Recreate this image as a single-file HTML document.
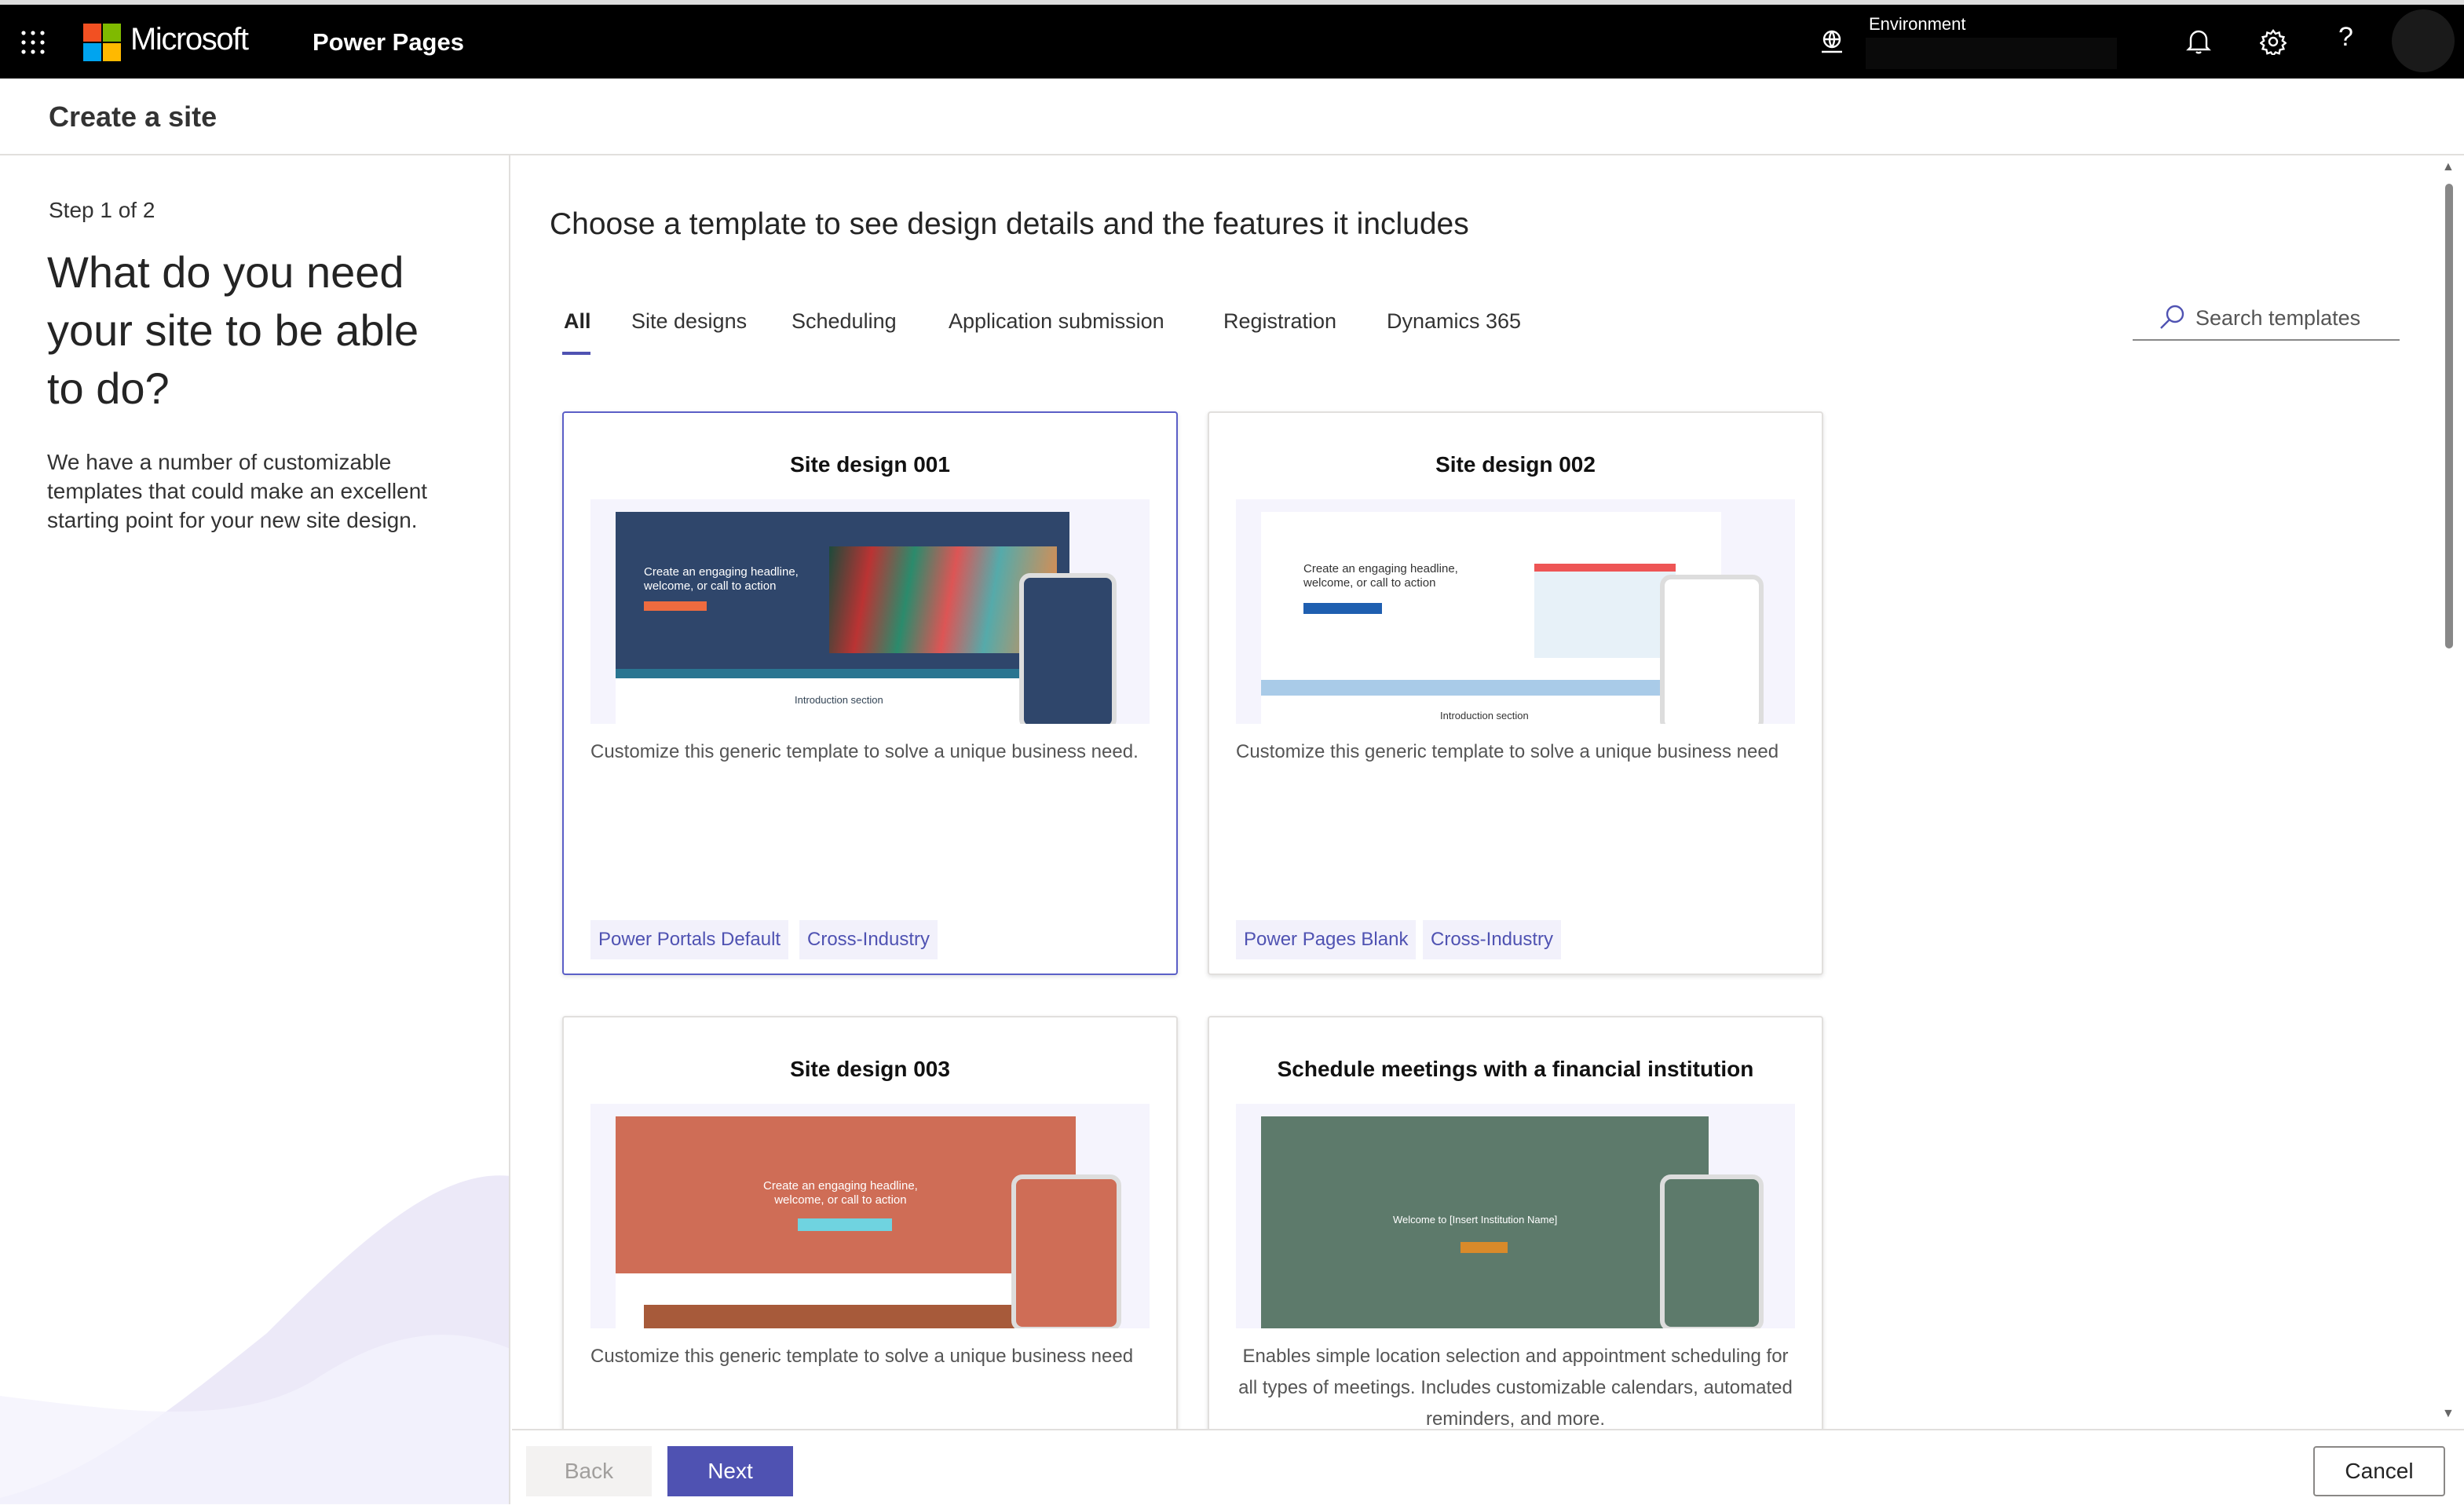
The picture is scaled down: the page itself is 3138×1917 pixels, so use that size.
<!DOCTYPE html>
<html><head><meta charset="utf-8"><style>
*{box-sizing:border-box;margin:0;padding:0}
html,body{width:3138px;height:1917px;overflow:hidden;background:#fff}
#r{zoom:2;width:1569px;height:958px;position:relative;font-family:"Segoe UI","Liberation Sans",sans-serif;color:#242424}
.a{position:absolute}
.card{position:absolute;width:392px;background:#fff;border:1px solid #e1dfdd;box-shadow:0 1px 3px rgba(0,0,0,.12);border-radius:2px;overflow:hidden}
.card h3{font-size:14px;font-weight:600;text-align:center;margin-top:25px;color:#111}
.card .img{position:absolute;left:17px;top:55px;width:356px;height:143px;background:#f5f4fd;overflow:hidden}
.card .desc{position:absolute;left:17px;top:206px;right:17px;font-size:12px;color:#555;line-height:20px}
.tag{position:absolute;top:323px;height:25px;background:#f2f1fb;color:#4f52b2;font-size:12px;line-height:25px;padding:0 5px}
.tab{position:absolute;top:197px;font-size:13.5px;color:#333}
</style></head><body><div id="r">
<div class="a" style="left:0;top:0;width:1569px;height:3px;background:#ddd"></div>
<div class="a" style="left:0;top:3px;width:1569px;height:47px;background:#000"></div>
<svg class="a" style="left:13px;top:19px" width="16" height="16"><g fill="#fff"><circle cx="2" cy="2" r="1.3"/><circle cx="8" cy="2" r="1.3"/><circle cx="14" cy="2" r="1.3"/><circle cx="2" cy="8" r="1.3"/><circle cx="8" cy="8" r="1.3"/><circle cx="14" cy="8" r="1.3"/><circle cx="2" cy="14" r="1.3"/><circle cx="8" cy="14" r="1.3"/><circle cx="14" cy="14" r="1.3"/></g></svg>
<svg class="a" style="left:53px;top:15px" width="25" height="25"><rect width="11.5" height="11.5" fill="#f25022"/><rect x="12.5" width="11.5" height="11.5" fill="#7fba00"/><rect y="12.5" width="11.5" height="11.5" fill="#00a4ef"/><rect x="12.5" y="12.5" width="11.5" height="11.5" fill="#ffb900"/></svg>
<div class="a" style="left:83px;top:14px;color:#fff;font-size:20px;letter-spacing:-.7px">Microsoft</div>
<div class="a" style="left:199px;top:18px;color:#fff;font-size:15.5px;font-weight:600">Power Pages</div>
<svg class="a" style="left:1158px;top:18px" width="17" height="17" fill="none" stroke="#fff" stroke-width="1.2"><circle cx="8.5" cy="7" r="5"/><path d="M3.5 7h10M8.5 2c-2 3-2 7 0 10M8.5 2c2 3 2 7 0 10M2 15h13"/></svg>
<div class="a" style="left:1190px;top:9px;color:#fff;font-size:11px">Environment</div>
<div class="a" style="left:1188px;top:24px;width:160px;height:20px;background:#0a0a0a"></div>
<svg class="a" style="left:1392px;top:18px" width="16" height="17" fill="none" stroke="#fff" stroke-width="1.2"><path d="M3 12V7a5 5 0 0 1 10 0v5l1.5 1.5h-13z M6.5 15a2 2 0 0 0 3 0"/></svg>
<svg class="a" style="left:1439px;top:18px" width="17" height="17" fill="none" stroke="#fff" stroke-width="1.2"><circle cx="8.5" cy="8.5" r="2.5"/><path d="M8.5 1.5l1.5 2 2.3-.8.5 2.4 2.4.5-.8 2.3 2 1.5-2 1.5.8 2.3-2.4.5-.5 2.4-2.3-.8-1.5 2-1.5-2-2.3.8-.5-2.4-2.4-.5.8-2.3-2-1.5 2-1.5-.8-2.3 2.4-.5.5-2.4 2.3.8z"/></svg>
<div class="a" style="left:1489px;top:14px;color:#fff;font-size:17px">?</div>
<div class="a" style="left:1523px;top:6px;width:40px;height:40px;border-radius:50%;background:#1a1a1a"></div>
<div class="a" style="left:0;top:50px;width:1569px;height:49px;border-bottom:1px solid #e1dfdd"></div>
<div class="a" style="left:31px;top:64px;font-size:18px;font-weight:600;color:#333">Create a site</div>
<div class="a" style="left:0;top:99px;width:325px;height:859px;border-right:1px solid #e1dfdd;overflow:hidden">
<svg class="a" style="left:0;top:640px" width="325" height="220"><path d="M0 215 C60 200 120 150 170 110 C230 50 280 5 325 10 V220 H0Z" fill="#ece9f8"/><path d="M0 150 C80 160 150 170 200 140 C260 100 300 110 325 120 V220 H0Z" fill="#f4f2fc" opacity=".8"/></svg>
</div>
<div class="a" style="left:31px;top:126px;font-size:14px;color:#333">Step 1 of 2</div>
<div class="a" style="left:30px;top:155px;font-size:28px;line-height:37px;color:#242424;width:255px">What do you need your site to be able to do?</div>
<div class="a" style="left:30px;top:285px;font-size:14px;line-height:18.5px;color:#333;width:260px">We have a number of customizable templates that could make an excellent starting point for your new site design.</div>
<div class="a" style="left:350px;top:132px;font-size:19.5px;color:#242424">Choose a template to see design details and the features it includes</div>
<div class="tab" style="left:359px;color:#242424;font-weight:600">All</div>
<div class="a" style="left:358px;top:224px;width:18px;height:2px;background:#4f52b2"></div>
<div class="tab" style="left:402px">Site designs</div>
<div class="tab" style="left:504px">Scheduling</div>
<div class="tab" style="left:604px">Application submission</div>
<div class="tab" style="left:779px">Registration</div>
<div class="tab" style="left:883px">Dynamics 365</div>
<svg class="a" style="left:1374px;top:193px" width="18" height="18" fill="none" stroke="#4f52b2" stroke-width="1.2"><circle cx="11" cy="7" r="5"/><path d="M7.5 10.5L2 16"/></svg>
<div class="a" style="left:1398px;top:195px;font-size:13.5px;color:#555">Search templates</div>
<div class="a" style="left:1358px;top:216px;width:170px;height:1px;background:#888"></div>
<div class="a" style="left:1553px;top:100px;width:15px;height:810px;background:#fff"></div>
<div class="a" style="left:1557px;top:117px;width:5px;height:296px;background:#888;border-radius:3px"></div>
<div class="a" style="left:1555px;top:102px;font-size:8px;color:#666">▲</div>
<div class="a" style="left:1555px;top:896px;font-size:8px;color:#666">▼</div>

<div class="card" style="left:358px;top:262px;height:359px;border:1px solid #5b5fc7">
<h3>Site design 001</h3>
<div class="img"><div class="a" style="left:16px;top:8px;width:289px;height:118px;background:#2f466b"></div><div class="a" style="left:16px;top:108px;width:289px;height:6px;background:#2a7591"></div><div class="a" style="left:16px;top:114px;width:289px;height:30px;background:#fff"></div>
<div class="a" style="left:34px;top:42px;color:#fff;font-size:7.5px;line-height:9px">Create an engaging headline,<br>welcome, or call to action</div><div class="a" style="left:34px;top:65px;width:40px;height:6px;background:#ee6b3f"></div>
<div class="a" style="left:152px;top:30px;width:145px;height:68px;background:linear-gradient(100deg,#1d4a3b,#b33,#2b8b6c,#d55,#5aa 70%,#e84)"></div>
<div class="a" style="left:130px;top:124px;font-size:6.5px;color:#345">Introduction section</div>
<div class="a" style="left:273px;top:47px;width:62px;height:100px;background:#2f466b;border:3px solid #ddd;border-radius:7px"></div></div>
<div class="desc">Customize this generic template to solve a unique business need.</div>
<div class="tag" style="left:17px">Power Portals Default</div><div class="tag" style="left:150px">Cross-Industry</div>
</div>

<div class="card" style="left:769px;top:262px;height:359px">
<h3>Site design 002</h3>
<div class="img"><div class="a" style="left:16px;top:8px;width:293px;height:136px;background:#fff"></div><div class="a" style="left:16px;top:115px;width:293px;height:10px;background:#a9cbe8"></div>
<div class="a" style="left:43px;top:40px;color:#333;font-size:7.5px;line-height:9px">Create an engaging headline,<br>welcome, or call to action</div><div class="a" style="left:43px;top:66px;width:50px;height:7px;background:#1f5fb0"></div>
<div class="a" style="left:190px;top:41px;width:90px;height:60px;background:#e7f1f8;border-top:5px solid #e55"></div>
<div class="a" style="left:130px;top:134px;font-size:6.5px;color:#333">Introduction section</div>
<div class="a" style="left:270px;top:48px;width:66px;height:100px;background:#fff;border:3px solid #ddd;border-radius:7px"></div></div>
<div class="desc">Customize this generic template to solve a unique business need</div>
<div class="tag" style="left:17px">Power Pages Blank</div><div class="tag" style="left:136px">Cross-Industry</div>
</div>

<div class="card" style="left:358px;top:647px;height:300px">
<h3>Site design 003</h3>
<div class="img"><div class="a" style="left:16px;top:8px;width:293px;height:100px;background:#cf6d56"></div><div class="a" style="left:16px;top:108px;width:293px;height:36px;background:#fff"></div><div class="a" style="left:34px;top:128px;width:240px;height:16px;background:#a75a3a"></div>
<div class="a" style="left:110px;top:48px;color:#fff;font-size:7.5px;line-height:9px;text-align:center">Create an engaging headline,<br>welcome, or call to action</div><div class="a" style="left:132px;top:73px;width:60px;height:8px;background:#6fd3e0"></div>
<div class="a" style="left:268px;top:45px;width:70px;height:100px;background:#cf6d56;border:3px solid #ddd;border-radius:7px"></div></div>
<div class="desc">Customize this generic template to solve a unique business need</div>
</div>

<div class="card" style="left:769px;top:647px;height:300px">
<h3>Schedule meetings with a financial institution</h3>
<div class="img"><div class="a" style="left:16px;top:8px;width:285px;height:136px;background:#5d7a6b"></div>
<div class="a" style="left:100px;top:70px;color:#fff;font-size:6.5px">Welcome to [Insert Institution Name]</div><div class="a" style="left:143px;top:88px;width:30px;height:7px;background:#d98a2a"></div>
<div class="a" style="left:270px;top:45px;width:66px;height:100px;background:#5d7a6b;border:3px solid #ddd;border-radius:7px"></div></div>
<div class="desc" style="text-align:center">Enables simple location selection and appointment scheduling for all types of meetings. Includes customizable calendars, automated reminders, and more.</div>
</div>

<div class="a" style="left:326px;top:910px;width:1243px;height:48px;background:#fff;border-top:1px solid #e1dfdd"></div>
<div class="a" style="left:335px;top:921px;width:80px;height:32px;background:#f3f2f1;color:#a19f9d;font-size:14px;text-align:center;line-height:32px">Back</div>
<div class="a" style="left:425px;top:921px;width:80px;height:32px;background:#4f52b2;color:#fff;font-size:14px;text-align:center;line-height:32px">Next</div>
<div class="a" style="left:1473px;top:921px;width:84px;height:32px;border:1px solid #8a8886;color:#242424;font-size:14px;text-align:center;line-height:30px;border-radius:2px">Cancel</div>
</div></body></html>
